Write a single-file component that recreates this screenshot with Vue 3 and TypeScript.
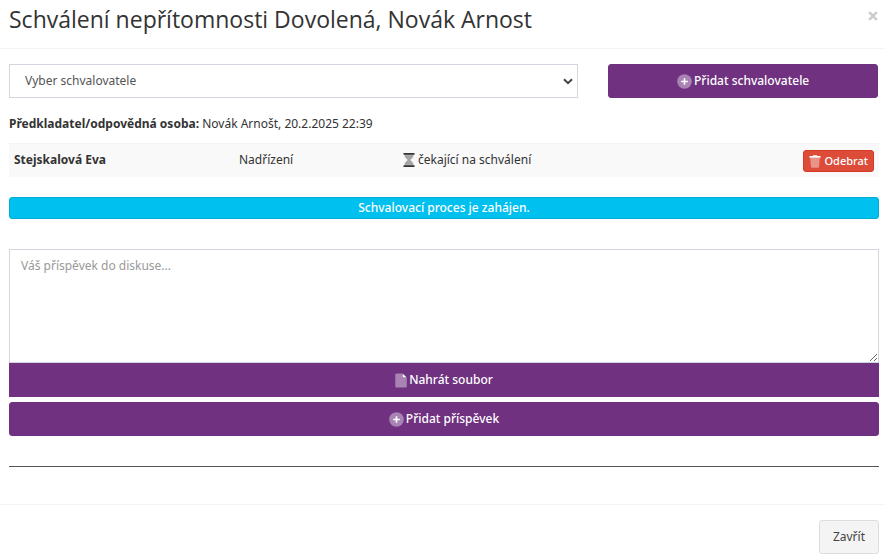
<script setup lang="ts">
import { ref } from 'vue'

interface Approver {
  id: number
  name: string
  role: string
  status: string
}

const selected = ref('')
const message = ref('')
const approvers = ref<Approver[]>([
  { id: 1, name: 'Stejskalová Eva', role: 'Nadřízení', status: 'čekající na schválení' },
])

function removeApprover(id: number) {
  approvers.value = approvers.value.filter((a) => a.id !== id)
}
</script>

<template>
  <section class="modal" role="dialog" aria-labelledby="modal-title">
    <header class="modal-header">
      <h4 id="modal-title" class="title">Schválení nepřítomnosti Dovolená, Novák Arnost</h4>
      <button type="button" class="close" aria-label="Zavřít okno">
        <svg width="10" height="10" viewBox="0 0 10 10">
          <path d="M1.2 1.2 8.8 8.8M8.8 1.2 1.2 8.8" fill="none" stroke="#ccc" stroke-width="2.4" />
        </svg>
      </button>
    </header>

    <div class="modal-body">
      <div class="picker">
        <div class="select-wrap">
          <select v-model="selected" class="select" aria-label="Vyber schvalovatele">
            <option value="">Vyber schvalovatele</option>
          </select>
          <svg class="chevron" width="10" height="7" viewBox="0 0 10 7">
            <path d="M1 1.2 5 5.2 9 1.2" fill="none" stroke="#444" stroke-width="2" />
          </svg>
        </div>
        <button type="button" class="btn primary">
          <svg width="15" height="15" viewBox="0 0 15 15">
            <circle cx="7.5" cy="7.5" r="7.3" fill="#fff" fill-opacity=".4" />
            <path d="M7.5 4.2v6.6M4.2 7.5h6.6" stroke="#fff" stroke-width="1.6" />
          </svg>
          <span>Přidat schvalovatele</span>
        </button>
      </div>

      <p class="submitter"><b>Předkladatel/odpovědná osoba:</b> Novák Arnošt, 20.2.2025 22:39</p>

      <table class="approvers">
        <tbody>
          <tr v-for="a in approvers" :key="a.id">
            <th scope="row" class="name">{{ a.name }}</th>
            <td class="role">{{ a.role }}</td>
            <td class="status">
              <span class="status-inner">
                <svg width="12" height="14" viewBox="0 0 12 14">
                  <path d="M1.5 1.5h9C10.5 4.5 8.7 5.8 7.2 7 8.7 8.2 10.5 9.5 10.5 12.5h-9C1.5 9.5 3.3 8.2 4.8 7 3.3 5.8 1.5 4.5 1.5 1.5Z" fill="#333" fill-opacity=".42" />
                  <path d="M.5 0h11v1.7H.5zM.5 12.3h11V14H.5z" fill="#333" />
                </svg>
                <span>{{ a.status }}</span>
              </span>
            </td>
            <td class="action">
              <button type="button" class="btn danger" @click="removeApprover(a.id)">
                <svg width="12" height="13" viewBox="0 0 12 13">
                  <path d="M1.2 3h9.6L10 12q-.1.8-.9.8H2.9Q2.1 12.800 2 12Z" fill="#fff" fill-opacity=".4" />
                  <path d="M.5 1h3.2l.6-.8h3.4l.6.8h3.2v1.7H.5Z" fill="#fff" />
                </svg>
                <span>Odebrat</span>
              </button>
            </td>
          </tr>
        </tbody>
      </table>

      <div class="notice" role="status">Schvalovací proces je zahájen.</div>

      <form class="discussion" @submit.prevent>
        <textarea v-model="message" class="message" aria-label="Váš příspěvek do diskuse" placeholder="Váš příspěvek do diskuse..."></textarea>
        <button type="button" class="btn primary square">
          <svg width="12" height="15" viewBox="0 0 12 15">
            <path d="M1.5.5H7v3.3q0 1.2 1.2 1.2h3.6v8.3q0 1.2-1.2 1.2H1.5Q.3 14.5.3 13.3V1.7Q.3.5 1.5.5Z" fill="#fff" fill-opacity=".4" />
            <path d="M7.5.5 11.8 4.6H7.500Z" fill="#fff" />
          </svg>
          <span>Nahrát soubor</span>
        </button>
        <button type="submit" class="btn primary add-post">
          <svg width="15" height="15" viewBox="0 0 15 15">
            <circle cx="7.5" cy="7.5" r="7.3" fill="#fff" fill-opacity=".4" />
            <path d="M7.5 4.2v6.6M4.2 7.5h6.6" stroke="#fff" stroke-width="1.6" />
          </svg>
          <span>Přidat příspěvek</span>
        </button>
      </form>

      <hr class="divider" />
    </div>

    <footer class="modal-footer">
      <button type="button" class="btn default">Zavřít</button>
    </footer>
  </section>
</template>

<style>
body {
  margin: 0;
  background: #fff;
}
</style>

<style scoped>
* {
  box-sizing: border-box;
}

.modal {
  color: #333;
  font: 12px/20px 'Noto Sans', 'Open Sans', sans-serif;
}

.modal-header {
  display: flex;
  align-items: flex-start;
  justify-content: space-between;
  padding: 3px 6px 13px 9px;
  border-bottom: 1px solid #f4f4f4;
}

.title {
  margin: 0;
  font: 400 23px/32px 'Open Sans', 'Noto Sans', sans-serif;
}

.close {
  display: flex;
  margin: 7px 0 0;
  padding: 1px;
  border: 0;
  background: none;
  cursor: pointer;
}

.modal-body {
  padding: 15px 6px 37px 9px;
}

.picker {
  display: grid;
  grid-template-columns: 19fr 9fr;
  gap: 30px;
  padding-right: 1px;
}

.select-wrap {
  display: grid;
  align-items: center;
}

.select-wrap > * {
  grid-area: 1 / 1;
}

.select {
  width: 100%;
  height: 34px;
  padding: 6px 15px;
  appearance: none;
  border: 1px solid #d2d6de;
  border-radius: 0;
  background: #fff;
  color: #555;
  font: inherit;
}

.chevron {
  justify-self: end;
  margin-right: 5px;
  pointer-events: none;
}

.btn {
  display: flex;
  align-items: center;
  justify-content: center;
  gap: 2px;
  height: 34px;
  padding: 0 12px;
  border: 1px solid transparent;
  border-radius: 3px;
  font: inherit;
  cursor: pointer;
}

.primary {
  border-color: #6f3180;
  background: #6f3180;
  color: #fff;
  font-weight: 500;
}

.submitter {
  margin: 16px 0 9px;
}

.approvers {
  width: 100%;
  border-spacing: 0;
  table-layout: fixed;
  background: #f9f9f9;
}

.approvers th,
.approvers td {
  height: 34px;
  padding: 6px 5px 0;
  border-top: 1px solid #f4f4f4;
  text-align: left;
  vertical-align: top;
}

.name {
  width: 225px;
}

.role {
  width: 164px;
}

.status-inner {
  display: flex;
  align-items: center;
  gap: 3px;
}

.action {
  width: 20%;
}

.danger {
  gap: 3px;
  height: 22px;
  margin-left: auto;
  padding: 0 5px;
  border-color: #d73925;
  background: #dd4b39;
  color: #fff;
  font-size: 11px;
  font-weight: 500;
}

.notice {
  margin: 20px 0 30px;
  border: 1px solid #00acd6;
  border-radius: 3px;
  background: #00c0ef;
  color: #fff;
  font-weight: 500;
  text-align: center;
}

.discussion {
  display: flex;
  flex-direction: column;
}

.message {
  display: block;
  width: 100%;
  height: 114px;
  padding: 6px 11px;
  border: 1px solid #d2d6de;
  border-radius: 0;
  color: #555;
  font: inherit;
  resize: vertical;
}

.message::placeholder {
  color: #999;
}

.square {
  border-radius: 0;
}

.add-post {
  margin-top: 5px;
}

.divider {
  margin: 30px 0 0;
  border: 0;
  border-top: 1px solid #555;
}

.modal-footer {
  display: flex;
  justify-content: flex-end;
  padding: 15px 6px 4px 15px;
  border-top: 1px solid #f4f4f4;
}

.default {
  padding: 0 13px;
  border-color: #ddd;
  background: #f4f4f4;
  color: #444;
}
</style>
